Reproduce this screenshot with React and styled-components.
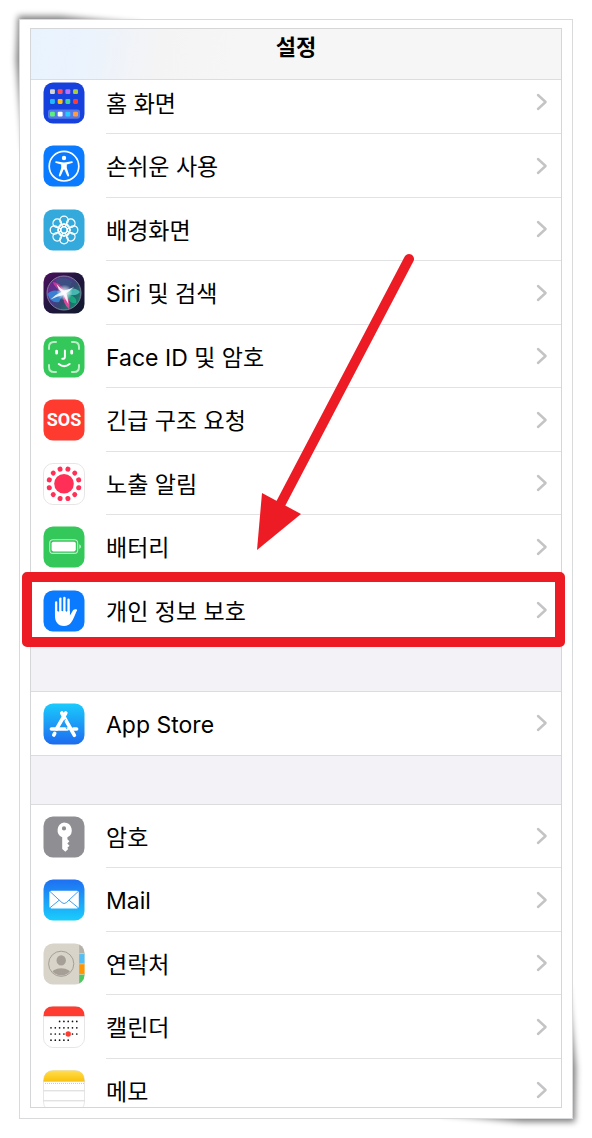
import React from 'react';
import styled, { createGlobalStyle } from 'styled-components';

const GlobalStyle = createGlobalStyle`
  *, *::before, *::after { box-sizing: border-box; }
  body {
    margin: 0;
    background: #ffffff;
    color: #000000;
    font-family: Inter, "Noto Sans CJK KR", sans-serif;
  }
`;

const Page = styled.div`
  position: relative;
  isolation: isolate;
  height: 100vh;
  padding: 19px;
`;

const Sheet = styled.div`
  display: flex;
  height: 100%;
  padding: 8px 10px 10px;
  border: 1px solid #d9dadb;
  background: #ffffff;
`;

const CornerShadow = styled.svg`
  position: absolute;
  z-index: -1;
  width: 200px;
  height: 200px;
  ${(p) => (p.$corner === 'start' ? 'top: 0; left: 0;' : 'bottom: 0; right: 0;')}
`;

const Frame = styled.main`
  position: relative;
  flex: 1;
  min-width: 0;
  display: flex;
  flex-direction: column;
  border: 1px solid #d5d6d8;
  background: #ffffff;
`;

const Header = styled.header`
  position: relative;
  z-index: 1;
  flex: none;
  height: 51px;
  padding-top: 3px;
  border-bottom: 1px solid #dddddf;
  background: linear-gradient(100deg, #e9f3ff 0%, #ebf3fd 10%, #f4f4f5 24%, #f6f6f6 40%, #f6f6f6 100%);
  text-align: center;
`;

const Title = styled.h1`
  margin: 0;
  font-size: 22px;
  line-height: 30px;
  font-weight: 600;
`;

const Scroller = styled.div`
  flex: 1;
  min-height: 0;
  overflow: hidden;
  background: #f2f2f7;
`;

const Groups = styled.div`
  display: flex;
  flex-direction: column;
  gap: 48px;
  margin-top: -9px;
`;

const Group = styled.ul`
  margin: 0;
  padding: 0;
  list-style: none;
  background: #ffffff;
  border-top: 1px solid #dcdcdf;
  border-bottom: 1px solid #dcdcdf;

  &:first-child { border-top: 0; }
`;

const Item = styled.li`
  height: 63px;
  &:nth-child(even) { height: 64px; }
`;

const RowLink = styled.a`
  display: flex;
  align-items: center;
  gap: 21px;
  height: 100%;
  padding-left: 12px;
  color: inherit;
  text-decoration: none;
`;

const RowBody = styled.span`
  flex: 1;
  align-self: stretch;
  display: flex;
  align-items: center;
  justify-content: space-between;
  padding-right: 13px;
  border-bottom: 1px solid #e2e2e4;

  ${Item}:last-child & { border-bottom-color: transparent; }
`;

const Label = styled.span`
  padding-top: 3px;
  font-size: 23px;
  line-height: 32px;
  white-space: nowrap;
`;

const IconSvg = styled.svg`
  flex: none;
  width: 42px;
  height: 42px;
`;

const ChevronSvg = styled.svg`
  flex: none;
  width: 12px;
  height: 18px;
`;

const Highlight = styled.div`
  position: absolute;
  top: 543px;
  left: -9px;
  right: -4px;
  height: 75px;
  border: 10px solid #ed1c24;
  border-radius: 5px;
  pointer-events: none;
`;

const Arrow = styled.svg`
  position: absolute;
  top: 221px;
  left: 219px;
  width: 170px;
  height: 310px;
  pointer-events: none;
`;

const Tile = ({ fill, outline, children }) => (
  <IconSvg viewBox="0 0 42 42" aria-hidden="true">
    <rect
      x="0.5" y="0.5" width="41" height="41" rx="9.5"
      fill={fill} stroke={outline ? '#dfdfe1' : 'none'} strokeWidth="0.8"
    />
    {children}
  </IconSvg>
);

const HOME_DOTS = [
  ['#d4d4d6', '#ff4d5e', '#b770ff', '#aacd36'],
  ['#21b7ff', '#fcbf12', '#3ed3a5', '#ff3a30'],
  ['#5df07a', '#ffffff', '#22ccff', '#ff9c43'],
];
const HOME_Y = [7.2, 17, 29.7];

const HomeIcon = () => (
  <Tile fill="#1641dc">
    <rect x="5" y="27.5" width="32" height="9.2" rx="2.6" fill="#5578e8" />
    {HOME_DOTS.map((row, r) =>
      row.map((c, i) => (
        <rect key={c} x={7 + i * 7.7} y={HOME_Y[r]} width="4.9" height="4.9" rx="1.1" fill={c} />
      ))
    )}
  </Tile>
);

const AccessIcon = () => (
  <Tile fill="#0a7aff">
    <circle cx="21" cy="21.2" r="14.8" fill="none" stroke="#fff" strokeWidth="1.7" />
    <circle cx="21" cy="13" r="2.2" fill="#fff" />
    <path
      d="M13.2 16.2 L19 17.3 Q21 17.6 23 17.3 L28.8 16.2 Q30 16.3 29.8 17.3 Q29.7 17.9 29 18.1 L23.8 19.4 V23 L26.2 30.2 Q26.3 31.3 25.4 31.5 Q24.6 31.6 24.2 30.8 L21.4 24.6 H20.6 L17.8 30.8 Q17.4 31.6 16.6 31.5 Q15.7 31.3 15.8 30.2 L18.2 23 V19.4 L13 18.1 Q12.3 17.9 12.2 17.3 Q12 16.3 13.2 16.2Z"
      fill="#fff"
    />
  </Tile>
);

const WallpaperIcon = () => (
  <Tile fill="#34aadc">
    <g fill="none" stroke="#fff" strokeWidth="1.3">
      {[0, 45, 90, 135, 180, 225, 270, 315].map((a) => (
        <g key={a} transform={`rotate(${a} 21 21)`}>
          <circle cx="21" cy="11.4" r="4.2" />
          <ellipse cx="21" cy="16.1" rx="2" ry="1.6" strokeWidth="1" />
        </g>
      ))}
      <circle cx="21" cy="21" r="3.1" />
    </g>
  </Tile>
);

const SiriIcon = () => (
  <IconSvg viewBox="0 0 42 42" aria-hidden="true">
    <defs>
      <linearGradient id="siriBg" x1="0" y1="0" x2="1" y2="1">
        <stop offset="0" stopColor="#4c105f" />
        <stop offset="0.45" stopColor="#22153f" />
        <stop offset="1" stopColor="#101b2d" />
      </linearGradient>
      <linearGradient id="siriOrb" x1="0.1" y1="0.2" x2="0.9" y2="0.8">
        <stop offset="0" stopColor="#7a2a9c" />
        <stop offset="0.4" stopColor="#54449c" />
        <stop offset="0.65" stopColor="#37587c" />
        <stop offset="1" stopColor="#11a47d" />
      </linearGradient>
      <radialGradient id="siriGlow">
        <stop offset="0" stopColor="#fff" />
        <stop offset="0.3" stopColor="#e8edff" stopOpacity="0.8" />
        <stop offset="1" stopColor="#fff" stopOpacity="0" />
      </radialGradient>
    </defs>
    <rect x="0.5" y="0.5" width="41" height="41" rx="9.5" fill="url(#siriBg)" />
    <circle cx="21" cy="21" r="17" fill="url(#siriOrb)" fillOpacity="0.8" stroke="#8b879e" strokeWidth="0.9" />
    <path d="M12 8 Q21 3 29 10 Q27 17 22 20 Q17 17 12 8Z" fill="#35577f" opacity="0.75" />
    <path d="M20 20 Q9 16 4.5 22 Q8 32 16 30 Q18 26 21 21Z" fill="#2f9ff0" opacity="0.7" />
    <path d="M21 20 Q31 13 37 20 Q34 25 22 22Z" fill="#4fd6c5" opacity="0.75" />
    <path d="M21 21 Q35 24 33 31 Q28 33 20 22Z" fill="#15cf8c" opacity="0.6" />
    <path d="M20 20 Q19 31 26 37 Q28 28 22 20Z" fill="#ed489d" opacity="0.9" />
    <path d="M20 21 Q10 14 10 10 Q17 10 22 20Z" fill="#e0409f" opacity="0.75" />
    <circle cx="21.5" cy="20.6" r="8" fill="url(#siriGlow)" />
    <path d="M13.5 12 Q18 17 21 18.6 Q27 17 31 15 Q27 19 23.4 21 Q25 26 25.4 32 Q22 27 20.6 23 Q14 24 7.5 27.5 Q13 22 18.4 20 Q15 17 13.5 12Z" fill="#fff" opacity="0.85" />
  </IconSvg>
);

const FaceIcon = () => (
  <Tile fill="#34c759">
    <g fill="none" stroke="#fff" strokeLinecap="round">
      <path
        strokeOpacity="0.68" strokeWidth="2"
        d="M6 13 V11 Q6 6 11 6 H13 M29 6 H31 Q36 6 36 11 V13 M36 29 V31 Q36 36 31 36 H29 M13 36 H11 Q6 36 6 31 V29"
      />
      <path strokeWidth="2.8" d="M13.6 15.2 V17.2 M28.7 15.2 V17.2" />
      <path strokeWidth="2" d="M21.9 14.6 V20.8 Q21.9 23 19.3 22.8" />
      <path strokeWidth="2.1" d="M15.8 28 Q21 32.3 26.6 28" />
    </g>
  </Tile>
);

const SosText = styled.text`
  font-family: Roboto, sans-serif;
  font-size: 18px;
  font-weight: 700;
  fill: #ffffff;
`;

const SosIcon = () => (
  <Tile fill="#ff3b30">
    <SosText x="21" y="27" textAnchor="middle">SOS</SosText>
  </Tile>
);

const ExposureIcon = () => (
  <Tile fill="#ffffff" outline>
    <g fill="#ff2f58">
      <circle cx="21" cy="20.8" r="9.8" />
      {Array.from({ length: 12 }, (_, i) => (
        <circle key={i} cx="21" cy="5.6" r="2.5" transform={`rotate(${15 + i * 30} 21 20.8)`} />
      ))}
    </g>
  </Tile>
);

const BatteryIcon = () => (
  <Tile fill="#34c759">
    <rect x="6.7" y="13.8" width="28" height="13.6" rx="3.4" fill="none" stroke="#fff" strokeOpacity="0.7" strokeWidth="1.1" />
    <rect x="8.6" y="15.8" width="24.2" height="9.6" rx="1.8" fill="#fff" />
    <path d="M36.3 18.3 Q38 19 38 20.6 Q38 22.2 36.3 22.9Z" fill="#fff" fillOpacity="0.7" />
  </Tile>
);

const HandIcon = () => (
  <Tile fill="#0a7aff">
    <g stroke="#fff" strokeWidth="2.5" strokeLinecap="round">
      <path d="M13.2 12.6 V25 M17.4 8.7 V24 M21.4 7.9 V24 M25.5 9.8 V24" />
    </g>
    <path
      d="M12 21 H26.8 V25.3 C28.3 24.3 29 21.5 30.3 20.1 C31.2 19.2 33.1 19 34 19.7 C34.4 20.3 33.6 21 33.1 22.2 C31.6 25.7 30.4 29.3 28.3 32.3 C26.6 34.8 24.1 36 21 36 C14.7 36 12 31.6 12 26Z"
      fill="#fff"
    />
    <path d="M15.3 12 V21 M19.4 9 V20.6 M23.5 10 V21" stroke="#0a7aff" strokeWidth="1.3" strokeLinecap="round" />
  </Tile>
);

const BlueGradient = ({ id, from, to }) => (
  <defs>
    <linearGradient id={id} x1="0" y1="0" x2="0" y2="1">
      <stop offset="0" stopColor={from} />
      <stop offset="1" stopColor={to} />
    </linearGradient>
  </defs>
);

const AppStoreIcon = () => (
  <Tile fill="url(#storeBg)">
    <BlueGradient id="storeBg" from="#1acbfc" to="#1e6bf0" />
    <g stroke="#fff" strokeWidth="3.6" strokeLinecap="round" fill="none">
      <path d="M22.8 10 L13.5 26" />
      <path d="M18.8 10 L31.4 32.3" />
      <path d="M8.4 26 H24.3 M30.5 26 H33.6" />
      <path d="M11.7 30.4 L10.8 32" />
    </g>
    <path d="M22.4 16.2 L20.4 19.7 L24 26" stroke="#219bf7" strokeWidth="0.9" fill="none" />
  </Tile>
);

const KeyIcon = () => (
  <Tile fill="#8e8e93">
    <path
      fill="#fff" fillRule="evenodd"
      d="M21 6.4 A7.8 7.8 0 0 1 24.4 21.2 V23.3 L26.4 25.3 L24.3 27.5 L26.5 29.7 L24.4 31.7 L25.2 33 L22.4 35.8 L19.2 33 V21.2 A7.8 7.8 0 0 1 21 6.4Z M21 10.3 A2.1 2.1 0 1 0 21 14.5 A2.1 2.1 0 1 0 21 10.3Z"
    />
  </Tile>
);

const MailIcon = () => (
  <Tile fill="url(#mailBg)">
    <BlueGradient id="mailBg" from="#1e6ff2" to="#1acdfc" />
    <rect x="6.4" y="11.8" width="29.4" height="17.6" rx="1.8" fill="#fff" />
    <path
      d="M6.9 12.4 L19 23.7 Q21.1 25.4 23.2 23.7 L35.3 12.4 M6.9 28.8 L16.2 21.2 M35.3 28.8 L26 21.2"
      fill="none" stroke="#2795f7" strokeWidth="0.9"
    />
  </Tile>
);

const ContactsIcon = () => (
  <IconSvg viewBox="0 0 42 42" aria-hidden="true">
    <defs>
      <clipPath id="contactsTile"><rect x="0.5" y="0.5" width="41" height="41" rx="9.5" /></clipPath>
      <clipPath id="contactsFace"><circle cx="18.2" cy="20.8" r="11.6" /></clipPath>
    </defs>
    <g clipPath="url(#contactsTile)">
      <rect width="42" height="42" fill="#d8d4ca" />
      <rect x="36.2" width="6" height="10.4" fill="#b4b1a8" />
      <rect x="36.2" y="10.4" width="6" height="10.4" fill="#53bef3" />
      <rect x="36.2" y="20.8" width="6" height="10.6" fill="#ff9500" />
      <rect x="36.2" y="31.4" width="6" height="11" fill="#4cc95f" />
      <path d="M36.2 10.6 H42 M36.2 20.9 H42 M36.2 31.4 H42" stroke="#e7e4dc" strokeWidth="0.5" />
    </g>
    <circle cx="18.2" cy="20.8" r="12.6" fill="none" stroke="#a69f97" strokeWidth="1" />
    <g clipPath="url(#contactsFace)" fill="#a69f97">
      <ellipse cx="18.2" cy="17.4" rx="4.7" ry="5.2" />
      <ellipse cx="18.2" cy="31.8" rx="10.5" ry="6.6" />
    </g>
  </IconSvg>
);

const CALENDAR_ROWS = [
  [2, 7, 15.4],
  [0, 7, 21.8],
  [0, 7, 28],
  [0, 5, 34.2],
];

const CalendarIcon = () => (
  <Tile fill="#ffffff" outline>
    <path d="M0.5 10.2 Q0.5 0.5 10 0.5 H32 Q41.5 0.5 41.5 10.2Z" fill="#ff3b30" />
    {CALENDAR_ROWS.map(([start, end, y]) =>
      Array.from({ length: end - start }, (_, i) => (
        <circle key={`${y}-${i}`} cx={8 + (start + i) * 4.3} cy={y} r="0.85" fill="#111" />
      ))
    )}
    <circle cx="25.2" cy="28" r="2.7" fill="#ff3b30" />
  </Tile>
);

const NotesIcon = () => (
  <Tile fill="#ffffff" outline>
    <BlueGradient id="notesTop" from="#ffdc50" to="#fcc40a" />
    <path d="M0.5 11 Q0.5 0.5 10 0.5 H32 Q41.5 0.5 41.5 11Z" fill="url(#notesTop)" />
    <path d="M0.5 11.4 H41.5" stroke="#c7bfa4" strokeWidth="0.8" />
    <path d="M2 13.4 H41" stroke="#b8b8b8" strokeWidth="0.9" strokeDasharray="0.9 1.1" />
    <path d="M0.5 20.8 H41.5 M0.5 30.8 H41.5" stroke="#d2d2d4" strokeWidth="0.9" />
  </Tile>
);

const Chevron = () => (
  <ChevronSvg viewBox="0 0 12 18" aria-hidden="true">
    <path d="M2 2 L9.6 9 L2 16" fill="none" stroke="#c4c4c6" strokeWidth="2.4" strokeLinecap="round" strokeLinejoin="round" />
  </ChevronSvg>
);

const GROUPS = [
  [
    { id: 'home', label: '홈 화면', Icon: HomeIcon },
    { id: 'accessibility', label: '손쉬운 사용', Icon: AccessIcon },
    { id: 'wallpaper', label: '배경화면', Icon: WallpaperIcon },
    { id: 'siri', label: 'Siri 및 검색', Icon: SiriIcon },
    { id: 'faceid', label: 'Face ID 및 암호', Icon: FaceIcon },
    { id: 'sos', label: '긴급 구조 요청', Icon: SosIcon },
    { id: 'exposure', label: '노출 알림', Icon: ExposureIcon },
    { id: 'battery', label: '배터리', Icon: BatteryIcon },
    { id: 'privacy', label: '개인 정보 보호', Icon: HandIcon },
  ],
  [{ id: 'appstore', label: 'App Store', Icon: AppStoreIcon }],
  [
    { id: 'passwords', label: '암호', Icon: KeyIcon },
    { id: 'mail', label: 'Mail', Icon: MailIcon },
    { id: 'contacts', label: '연락처', Icon: ContactsIcon },
    { id: 'calendar', label: '캘린더', Icon: CalendarIcon },
    { id: 'notes', label: '메모', Icon: NotesIcon },
  ],
];

const SettingsRow = ({ id, label, Icon }) => (
  <Item>
    <RowLink href={`#${id}`}>
      <Icon />
      <RowBody>
        <Label>{label}</Label>
        <Chevron />
      </RowBody>
    </RowLink>
  </Item>
);

export default function App() {
  return (
    <Page>
      <GlobalStyle />
      <CornerShadow $corner="start" viewBox="0 0 200 200" aria-hidden="true">
        <defs>
          <filter id="shadowBlurA" x="-20%" y="-20%" width="140%" height="140%">
            <feGaussianBlur stdDeviation="3" />
          </filter>
        </defs>
        <path d="M18 16 L60 16 L140 24 L140 40 L40 150 L24 150 L16 60Z" fill="#000" fillOpacity="0.5" filter="url(#shadowBlurA)" />
      </CornerShadow>
      <CornerShadow $corner="end" viewBox="0 0 200 200" aria-hidden="true">
        <defs>
          <filter id="shadowBlurB" x="-20%" y="-20%" width="140%" height="140%">
            <feGaussianBlur stdDeviation="3" />
          </filter>
        </defs>
        <path d="M183 184 L130 184 L50 176 L50 160 L160 40 L176 50 L184 130Z" fill="#000" fillOpacity="0.5" filter="url(#shadowBlurB)" />
      </CornerShadow>
      <Sheet>
        <Frame>
          <Header>
            <Title>설정</Title>
          </Header>
          <Scroller>
            <Groups>
              {GROUPS.map((rows) => (
                <Group key={rows[0].id}>
                  {rows.map((row) => (
                    <SettingsRow key={row.id} {...row} />
                  ))}
                </Group>
              ))}
            </Groups>
          </Scroller>
          <Highlight />
          <Arrow viewBox="0 0 170 310" aria-hidden="true">
            <path d="M159 9 L30 255" stroke="#ed1c24" strokeWidth="10" strokeLinecap="round" />
            <path d="M12 243 L51 264 L7 300Z" fill="#ed1c24" />
          </Arrow>
        </Frame>
      </Sheet>
    </Page>
  );
}
